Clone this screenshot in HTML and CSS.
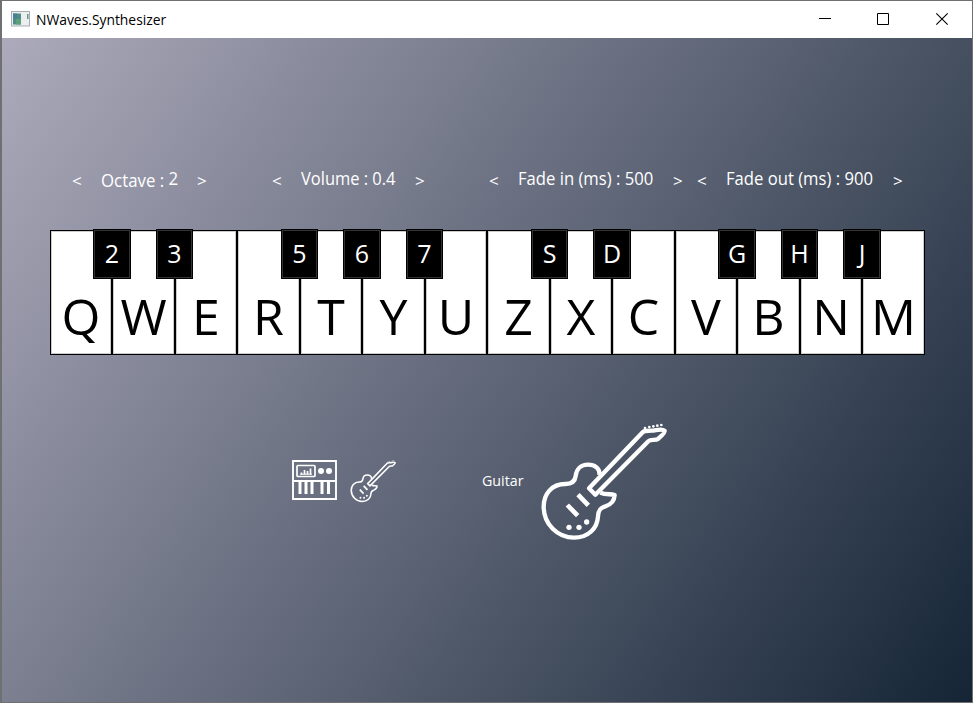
FILE: index.html
```html
<!DOCTYPE html>
<html lang="en">
<head>
<meta charset="utf-8">
<title>NWaves.Synthesizer</title>
<link rel="stylesheet" href="styles.css">
</head>
<body>
<div class="window">
  <header class="titlebar">
    <svg class="app-icon" width="19" height="16" viewBox="0 0 19 16">
      <rect x=".5" y=".5" width="18" height="14.5" fill="#eceef0" stroke="#a9adb2"/>
      <rect x="2" y="2.5" width="8" height="11" fill="#4d8d86"/>
      <path d="M2 2.5h4v5H2z" fill="#4b7f9c"/>
      <path d="M5 8h5v5.500H5z" fill="#5aa07a"/>
      <path d="M16 3h1.500v5H16z" fill="#5b9a92"/>
    </svg>
    <span class="title"><span class="fit">NWaves.Synthesizer</span></span>
    <svg class="caption" width="175" height="37" viewBox="0 0 175 37" fill="none" stroke="#000">
      <path d="M22 17.500h12"/>
      <path d="M80.500 12.500h11v11h-11z"/>
      <path d="M139.300 12.300l11.400 11.400M150.700 12.300l-11.400 11.400" stroke-width="1.100"/>
    </svg>
  </header>
  <main class="stage">
    <section class="controls">
      <div class="control octave"><span class="arrow">&lt;</span><span class="label"><span class="fit"><span class="low">Octave :</span> 2</span></span><span class="arrow">&gt;</span></div>
      <div class="control volume"><span class="arrow">&lt;</span><span class="label"><span class="fit">Volume : 0.4</span></span><span class="arrow">&gt;</span></div>
      <div class="control fade-in"><span class="arrow">&lt;</span><span class="label"><span class="fit">Fade in (ms) : 500</span></span><span class="arrow">&gt;</span></div>
      <div class="control fade-out"><span class="arrow">&lt;</span><span class="label"><span class="fit">Fade out (ms) : 900</span></span><span class="arrow">&gt;</span></div>
    </section>
    <section class="piano">
      <div class="key"><span>Q</span><b class="sharp">2</b></div>
      <div class="key"><span>W</span><b class="sharp">3</b></div>
      <div class="key"><span>E</span></div>
      <div class="key"><span>R</span><b class="sharp">5</b></div>
      <div class="key"><span>T</span><b class="sharp">6</b></div>
      <div class="key"><span>Y</span><b class="sharp">7</b></div>
      <div class="key"><span>U</span></div>
      <div class="key"><span>Z</span><b class="sharp">S</b></div>
      <div class="key"><span>X</span><b class="sharp">D</b></div>
      <div class="key"><span>C</span></div>
      <div class="key"><span>V</span><b class="sharp">G</b></div>
      <div class="key"><span>B</span><b class="sharp">H</b></div>
      <div class="key"><span>N</span><b class="sharp">J</b></div>
      <div class="key"><span>M</span></div>
    </section>
    <section class="instruments">
      <svg class="synth" width="45" height="41" viewBox="0 0 45 41" fill="none" stroke="#fff">
        <path d="M1 1h43v38H1zM1 21h43" stroke-width="1.900"/>
        <rect x="5" y="5.500" width="18" height="11" rx="1" stroke-width="1.700"/>
        <path d="M9.500 14.500v-2M12.500 14.500v-4.500M15.500 14.500v-3.500M18.500 14.500v-6" stroke-width="1.700"/>
        <path d="M8 14.200h12"/>
        <circle cx="29" cy="11" r="3" fill="#fff" stroke="none"/>
        <circle cx="37" cy="11" r="3" fill="#fff" stroke="none"/>
        <path d="M8 22v12M14 22v12M20 22v12M30 22v12M36.500 22v12" stroke-width="3"/>
      </svg>
      <svg class="guitar-small" width="55" height="49" viewBox="0 0 450 405"><use href="#guitar"/></svg>
      <span class="name"><span class="fit">Guitar</span></span>
      <svg class="guitar-large" width="150" height="135" viewBox="0 0 450 405">
        <g id="guitar" fill="none" stroke="#fff" stroke-width="13" stroke-linejoin="round">
          <path d="M208 180C211 160 194 149 174 149C153 149 139 163 137 183C135 200 125 207 106 207C65 207 41 237 41 275C41 328 83 368 132 368C175 368 202 340 204 304C205 286 211 278 226 274C243 269 253 259 254 240C242 236 229 240 211 233"/>
          <path d="M177 220L338 52C344 46 352 48 365 47C379 46 396 39 404 47C407 52 393 64 385 71C376 78 363 71 355 79L196 239Z"/>
          <path d="M144 239L175 271M112 270L143 302" stroke-width="14"/>
          <g fill="#fff" stroke="none"><circle cx="117" cy="337" r="8"/><circle cx="147" cy="337" r="8"/><circle cx="170" cy="321" r="8"/>
          <circle cx="345" cy="39" r="4"/><circle cx="358" cy="36" r="4"/><circle cx="370" cy="34" r="4"/><circle cx="382" cy="32" r="4"/><circle cx="394" cy="30" r="4"/></g>
        </g>
      </svg>
    </section>
  </main>
</div>
</body>
</html>
```
FILE: styles.css
```css
* { box-sizing: border-box; }
body {
  margin: 0;
  font-family: "Open Sans", "Noto Sans", sans-serif;
  overflow: hidden;
}
.window {
  width: 973px;
  height: 703px;
  border: 1px solid #6f7072;
  border-left-width: 2px;
  display: flex;
  flex-direction: column;
}
.titlebar {
  height: 37px;
  flex: none;
  display: flex;
  align-items: flex-start;
  background: #fff;
}
.app-icon { margin: 10px 6px 0 9px; }
.title {
  font-size: 14px;
  line-height: 37px;
  color: #000;
}
.caption { margin-left: auto; margin-right: 0; }
.fit {
  display: inline-block;
  white-space: nowrap;
  transform-origin: 0 50%;
}
.title .fit { transform: scaleX(.99); }
.stage {
  flex: 1;
  background: linear-gradient(124.390deg, #acaabb, #152536);
  color: #fff;
}
.controls {
  display: flex;
  height: 192px;
  padding: 127px 0 0 70px;
}
.control {
  display: flex;
  height: 26px;
  font-size: 18px;
  line-height: 26px;
}
.arrow {
  flex: none;
  width: 10px;
  font-size: 17px;
  padding-top: 3px;
}
.label { margin: 0 19px; }
.octave .label { width: 77px; }
.volume .label { width: 95px; }
.fade-in .label { width: 136px; }
.fade-out .label { width: 148px; }
.octave { margin-right: 65px; }
.volume { margin-right: 64px; }
.fade-in { margin-right: 14px; }
.label .fit { transform: scaleX(.925); }
.octave .fit { transform: scaleX(.935); }
.volume .fit { transform: scaleX(.915); }
.low { position: relative; top: 2px; }
.piano {
  display: grid;
  grid-template-columns: repeat(7, 62px 63px);
  height: 125px;
  margin-left: 48px;
}
.key {
  position: relative;
  border: 1px solid #000;
  background: #fff;
  box-shadow: inset 1px 0 #ccc, inset -1px 0 #ccc, inset 0 -1px #ccc, inset 0 1px #ccc;
  color: #000;
  font-size: 50px;
  line-height: 68px;
  padding-top: 51px;
  display: flex;
  justify-content: center;
}
.sharp {
  position: absolute;
  z-index: 1;
  top: -2px;
  right: -20px;
  width: 38px;
  height: 50px;
  border: 1px solid #000;
  background: #000;
  box-shadow: inset 0 0 0 1px #333;
  color: #fff;
  font-size: 25px;
  font-weight: 400;
  line-height: 47px;
  text-align: center;
}
.key:nth-child(even) .sharp { right: -19px; width: 37px; }
.instruments {
  display: flex;
  align-items: flex-start;
  padding: 60px 0 0 290px;
}
.synth { margin-top: 45px; }
.guitar-small { margin: 42px 0 0 9px; }
.name {
  width: 50px;
  margin: 53px 0 0 81px;
  font-size: 15px;
  line-height: 24px;
}
.name .fit { transform: scaleX(.95); }
.guitar-large { margin-left: -2px; }
```
